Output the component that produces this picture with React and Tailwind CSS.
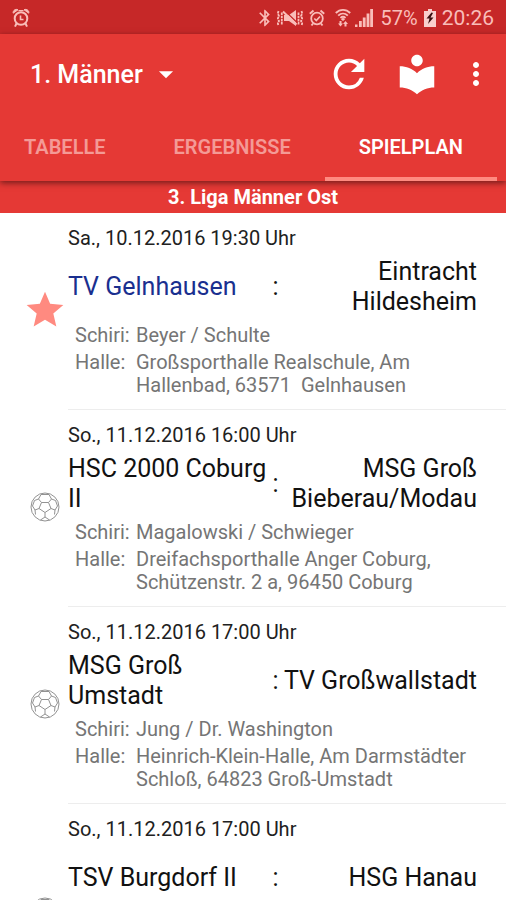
import React, { useState } from "react";
import {
  MdArrowDropDown,
  MdBluetooth,
  MdLocalLibrary,
  MdMoreVert,
  MdRefresh,
  MdStar,
} from "react-icons/md";

const TABS = [
  { label: "TABELLE", className: "pl-6 pr-[34px]" },
  { label: "ERGEBNISSE", className: "px-[34px]" },
  { label: "SPIELPLAN", className: "px-[34px]" },
];

const GAMES = [
  {
    date: "Sa., 10.12.2016 19:30 Uhr",
    home: "TV Gelnhausen",
    guest: "Eintracht Hildesheim",
    referees: "Beyer / Schulte",
    venue: "Großsporthalle Realschule, Am Hallenbad, 63571 \u00a0Gelnhausen",
    favorite: true,
  },
  {
    date: "So., 11.12.2016 16:00 Uhr",
    home: "HSC 2000 Coburg II",
    guest: "MSG Groß Bieberau/Modau",
    referees: "Magalowski / Schwieger",
    venue: "Dreifachsporthalle Anger Coburg, Schützenstr. 2 a, 96450 Coburg",
  },
  {
    date: "So., 11.12.2016 17:00 Uhr",
    home: "MSG Groß Umstadt",
    guest: "TV Großwallstadt",
    referees: "Jung / Dr. Washington",
    venue: "Heinrich-Klein-Halle, Am Darmstädter Schloß, 64823 Groß-Umstadt",
  },
  {
    date: "So., 11.12.2016 17:00 Uhr",
    home: "TSV Burgdorf II",
    guest: "HSG Hanau",
  },
];

function BellAlarmIcon() {
  return (
    <svg width="18" height="20" viewBox="0 0 18 20" fill="none" stroke="currentColor">
      <circle cx="9" cy="10.5" r="6.3" strokeWidth="2" />
      <path d="M8.5 7.5v4h3" strokeWidth="1.6" />
      <path d="M1.2 5.2C.6 2.6 3.6.4 6 1.8zM16.8 5.2c.6-2.6-2.4-4.8-4.8-3.4z" fill="currentColor" strokeWidth="1" />
      <path d="M4.5 15.5 3 18.6M13.5 15.5l1.5 3.1" strokeWidth="2" />
      <path d="M6.5 2.6h5" strokeWidth="1.2" />
    </svg>
  );
}

function VibrateMuteIcon() {
  return (
    <svg width="26" height="18" viewBox="0 0 26 18" fill="none" stroke="currentColor">
      <path d="M1.5 2 .8 4.5 2 7 .8 9.5 2 12 .8 14.5l.7 2M4.800 3.500v12" strokeWidth="1.8" strokeDasharray="2.500 .7" />
      <path d="M24.500 2l.7 2.500L24 7l1.200 2.500L24 12l1.200 2.500-.7 2M21.500 3.500v12" strokeWidth="1.8" strokeDasharray="2.500 .7" />
      <path d="M7 6h5l7-5v16l-7-5H7z" fill="currentColor" stroke="none" />
      <path d="M7.500 1.500 20.500 14" stroke="#c62828" strokeWidth="1.300" />
      <path d="M6 2.500 19.500 15.500" strokeWidth="2" />
    </svg>
  );
}

function AlarmCheckIcon() {
  return (
    <svg width="16" height="18" viewBox="0 0 16 18" fill="none" stroke="currentColor">
      <circle cx="8" cy="9.5" r="5.8" strokeWidth="1.8" />
      <path d="M5.3 9.5l2 2 3.7-4" strokeWidth="1.7" />
      <path d="M.8 4.8 4.5 1.5M15.2 4.8l-3.7-3.3M4 14.5l-1.5 2M12 14.5l1.5 2" strokeWidth="1.9" />
    </svg>
  );
}

function WifiIcon() {
  return (
    <svg width="16" height="20" viewBox="0 0 16 20" fill="none" stroke="currentColor">
      <path d="M.8 5C5 .8 11 .8 15.2 5M3.2 7.6c2.8-2.7 6.8-2.7 9.6 0M5.5 10c1.5-1.4 3.5-1.4 5 0" strokeWidth="1.9" />
      <path d="M8 9.5l2 2-2 1.5-2-1.5z" fill="currentColor" stroke="none" />
      <path d="M5.5 18.5 3 15.5h1.5V13h2v2.5H8zM10.5 13l2.5 3h-1.5v2.5h-2V16H8z" fill="currentColor" stroke="none" />
    </svg>
  );
}

function SignalIcon() {
  return (
    <svg width="18" height="18" viewBox="0 0 18 18" fill="currentColor">
      <path d="M0 15.5h2.500V18H0zM4 12h2.800v6H4zM7.800 8.500h2.800V18H7.800zM11.600 4.500h2.800V18h-2.800zM15.200 0H18v18h-2.800z" />
    </svg>
  );
}

function BatteryIcon() {
  return (
    <svg width="12" height="18" viewBox="0 0 12 18">
      <path d="M4 0h4v2h4v16H0V2h4z" fill="#f9cfcc" />
      <path d="M7.5 3.5 2.5 9.500h3L4 15l5.500-6.500h-3L9 4z" fill="#3a1010" />
    </svg>
  );
}

function HandballIcon() {
  return (
    <svg width="30" height="30" viewBox="0 0 30 30" fill="none" stroke="#929292" strokeWidth="1">
      <circle cx="15" cy="15" r="14" />
      <path d="M11.5 10.5h7l2.5 6-6 4-6-4z" />
      <path d="M11.5 10.5 8.5 7l2.5-4.500h8L21.500 7l-3 3.500M8.500 7 4.500 8.500 2.500 14l2.500 4 4-1.500M21.500 7l4 1.500 2 5.500-2.500 4-4-1.500M15 20.500V25l-4.500 3M15 25l4.500 3M5 18l.5 4.500M25 18l-.5 4.500" />
    </svg>
  );
}

function StatusBar() {
  return (
    <div className="flex h-[34px] shrink-0 items-center bg-[#c62828] px-3 pt-0.5 text-[#f9bdb9]">
      <BellAlarmIcon />
      <div className="ml-auto flex items-center gap-1.5">
        <MdBluetooth size={20} className="-mr-1" />
        <VibrateMuteIcon />
        <AlarmCheckIcon />
        <span className="mx-1 flex items-center gap-1">
          <WifiIcon />
          <SignalIcon />
        </span>
        <span className="-ml-0.5 text-[20px] leading-6">57%</span>
        <BatteryIcon />
        <span className="text-[21px] leading-6">20:26</span>
      </div>
    </div>
  );
}

function AppBar() {
  return (
    <div className="flex h-[82px] items-center pl-[30px] pr-3">
      <div className="relative">
        <select
          aria-label="Mannschaft"
          className="appearance-none bg-transparent pr-12 text-[25px] font-medium leading-8 text-white outline-none"
        >
          <option className="text-black">1. Männer</option>
        </select>
        <MdArrowDropDown size={34} className="pointer-events-none absolute bottom-0 right-2" />
      </div>
      <div className="ml-auto flex items-center pb-0.5">
        <button aria-label="Aktualisieren" className="mr-[22px]">
          <MdRefresh size={46} />
        </button>
        <button aria-label="Bibliothek" className="mr-[18px]">
          <MdLocalLibrary size={46} />
        </button>
        <button aria-label="Mehr">
          <MdMoreVert size={36} />
        </button>
      </div>
    </div>
  );
}

function Tabs() {
  const [active, setActive] = useState("SPIELPLAN");

  return (
    <div role="tablist" className="flex h-[65px] overflow-hidden">
      {TABS.map((tab) => (
        <button
          key={tab.label}
          role="tab"
          aria-selected={active === tab.label}
          onClick={() => setActive(tab.label)}
          className={`border-b-4 text-[20px] font-semibold ${tab.className} ${
            active === tab.label
              ? "border-[#ff8a80] text-white"
              : "border-transparent text-[#f49a96]"
          }`}
        >
          {tab.label}
        </button>
      ))}
    </div>
  );
}

function Game({ game }) {
  return (
    <li className="flex">
      <div className="flex w-[68px] shrink-0 items-center justify-center pb-[3px] pl-[22px]">
        {game.favorite ? (
          <MdStar size={44} className="shrink-0 text-[#ff8a80]" />
        ) : (
          <HandballIcon />
        )}
      </div>
      <div className="flex-1 border-b border-[#ededed] pb-3 pt-[13px]">
        <p className="text-[20px] leading-6 text-[#212121]">{game.date}</p>
        <div className="mt-[7px] flex min-h-[60px] items-center pr-[29px] text-[25px] leading-[30px] text-[#111]">
          <p className={game.favorite ? "w-1/2 text-[#1a2f8f]" : "w-1/2"}>{game.home}</p>
          <span>:</span>
          <p className="flex-1 text-right">{game.guest}</p>
        </div>
        {game.referees ? (
          <dl className="mt-[7px] grid grid-cols-[61px_1fr] gap-y-1 pl-[7px] pr-[29px] text-[20px] leading-[23px] text-[#757575]">
            <dt>Schiri:</dt>
            <dd>{game.referees}</dd>
            <dt>Halle:</dt>
            <dd>{game.venue}</dd>
          </dl>
        ) : (
          <div className="h-[102px]" />
        )}
      </div>
    </li>
  );
}

export default function App() {
  return (
    <div className="flex h-screen flex-col overflow-hidden bg-white font-['Roboto',sans-serif]">
      <StatusBar />
      <header className="relative shrink-0 bg-[#e53935] text-white shadow-[0_2px_6px_rgba(0,0,0,0.5)]">
        <AppBar />
        <Tabs />
      </header>
      <h2 className="h-8 shrink-0 bg-[#e53935] text-center text-[20px] font-bold leading-8 text-white">
        3. Liga Männer Ost
      </h2>
      <ul className="min-h-0 flex-1 overflow-hidden">
        {GAMES.map((game) => (
          <Game key={game.home} game={game} />
        ))}
      </ul>
    </div>
  );
}
